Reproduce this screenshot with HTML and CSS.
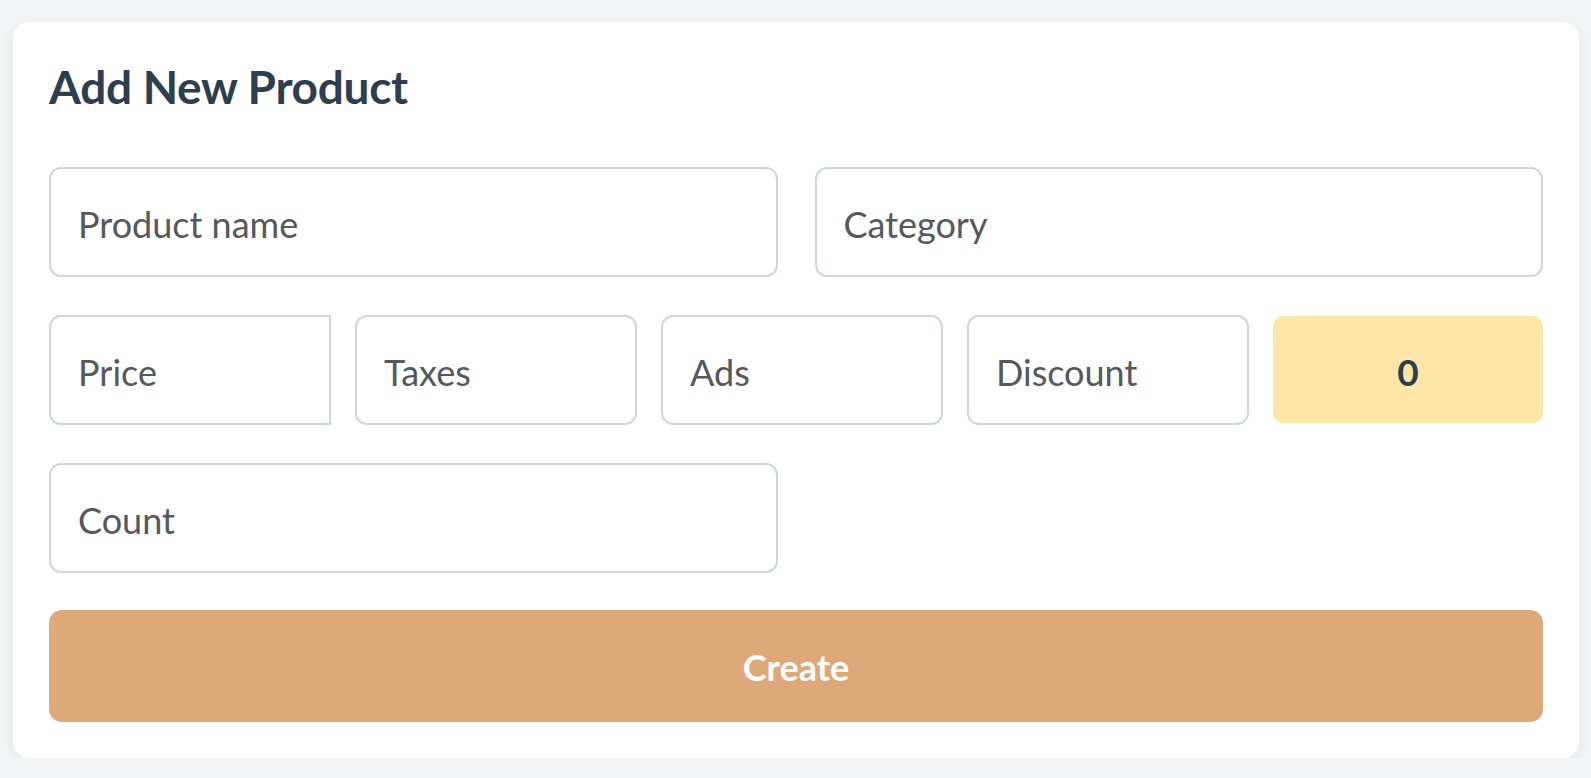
FILE: index.html
```html
<!DOCTYPE html>
<html lang="en">
<head>
<meta charset="utf-8">
<title>Add New Product</title>
<link rel="stylesheet" href="styles.css">
</head>
<body>
<div class="card">
  <h1 class="title">Add New Product</h1>
  <div class="form">
    <div class="row row-two">
      <input class="field" type="text" placeholder="Product name">
      <input class="field" type="text" placeholder="Category">
    </div>
    <div class="row row-five">
      <input class="field field-price" type="text" placeholder="Price">
      <input class="field field-small" type="text" placeholder="Taxes">
      <input class="field field-small" type="text" placeholder="Ads">
      <input class="field field-small" type="text" placeholder="Discount">
      <div class="total">0</div>
    </div>
    <div class="row row-two">
      <input class="field" type="text" placeholder="Count">
    </div>
    <button class="create" type="button">Create</button>
  </div>
</div>
</body>
</html>
```

FILE: styles.css
```css
* { box-sizing: border-box; }

html, body {
  margin: 0;
  background: #f3f4f6;
}

body {
  padding: 22px 12px 0 13px;
  font-family: Lato, "Open Sans", "Liberation Sans", sans-serif;
}

.card {
  background: #ffffff;
  border-radius: 16px;
  padding: 36px;
  box-shadow: 0 4px 18px rgba(17, 24, 39, 0.07);
}

.title {
  margin: 0 0 51px 0;
  font-size: 46px;
  line-height: 57.6px;
  font-weight: 700;
  letter-spacing: -0.3px;
  color: #2c3e50;
}

.form {
  display: flex;
  flex-direction: column;
  gap: 38px;
}

.row {
  display: flex;
  height: 110px;
}

.row-two {
  display: grid;
  grid-template-columns: 1fr 1fr;
  column-gap: 37px;
}

.row-five {
  gap: 24.5px;
  align-items: center;
}

.field {
  height: 110px;
  width: 100%;
  border: 2px solid #d1d5db;
  border-radius: 12px;
  padding: 4px 24px 0 27px;
  font-family: Lato, "Open Sans", "Liberation Sans", sans-serif;
  font-size: 36px;
  color: #333;
  background: #fff;
  outline: none;
}

.field::placeholder {
  color: #55585d;
  opacity: 1;
}

.field-small,
.field-price {
  width: 281.5px;
  flex: none;
}

.field-price {
  border-radius: 12px 0 0 12px;
}

.total {
  flex: 1;
  height: 107px;
  padding-top: 3px;
  background: #fee6a8;
  border-radius: 10px;
  display: flex;
  align-items: center;
  justify-content: center;
  font-size: 37px;
  font-weight: 700;
  color: #2c3e50;
}

.create {
  height: 112px;
  padding-top: 3px;
  border: none;
  border-radius: 13px;
  background: #dea978;
  color: #ffffff;
  font-family: Lato, "Open Sans", "Liberation Sans", sans-serif;
  font-size: 36px;
  font-weight: 700;
  cursor: pointer;
  margin-top: -1px;
}
```
